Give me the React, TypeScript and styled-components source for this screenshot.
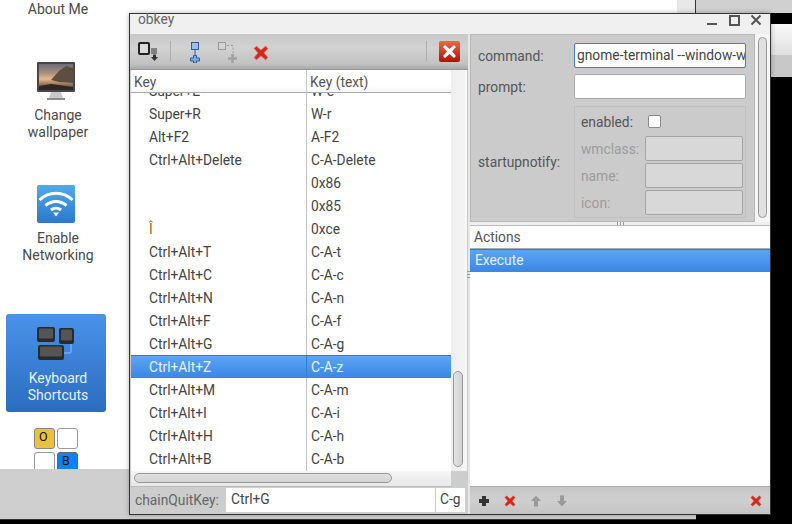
import React from "react";
import styled, { createGlobalStyle } from "styled-components";

const Global = createGlobalStyle`
  html, body { margin: 0; padding: 0; background: #000; }
  body { font-family: Roboto, "Liberation Sans", sans-serif; font-size: 13.8px; color: #444; overflow: hidden; }
  * { box-sizing: border-box; }
`;

const Desktop = styled.div`
  position: relative;
  width: 792px;
  height: 524px;
  overflow: hidden;
  background: #000;
`;
const Backdrop = styled.div`
  display: grid;
  grid-template-columns: 129px 567px 96px;
  grid-template-rows: 469px 51px;
  height: 524px;
`;
const Sidebar = styled.div`
  background: #fff;
  display: flex;
  flex-direction: column;
  border-right: 1px solid #333;
  overflow: hidden;
  width: 130px;
`;
const SideItem = styled.div<{ $top: number; $active?: boolean }>`
  width: 100px;
  margin: ${(p) => p.$top}px 0 0 6px;
  display: flex;
  flex-direction: column;
  align-items: center;
  gap: 7px;
  flex: none;
  font-size: 14px;
  line-height: 17px;
  text-align: center;
  color: ${(p) => (p.$active ? "#e6f0fb" : "#4a4a4a")};
  ${(p) =>
    p.$active &&
    `height: 98px; padding-top: 11px; border-radius: 3px; background: linear-gradient(#4a92ea, #2a6dc0);`}
`;
const SideLabel = styled.div`
  white-space: pre-line;
  margin-left: 4px;
`;
const Tiles = styled.div`
  display: grid;
  grid-template-columns: 20px 20px;
  gap: 3px;
  margin: 16px 0 0 34px;
`;
const Tile = styled.div<{ $bg: string; $border: string }>`
  width: 21px;
  height: 21px;
  background: ${(p) => p.$bg};
  border: 1px solid ${(p) => p.$border};
  border-radius: 3px;
  font-size: 12.5px;
  line-height: 15px;
  padding-left: 4px;
  color: #111;
`;
const PageMiddle = styled.div`
  background: linear-gradient(to right, #fff 96.8%, #e8e8e8 96.8%);
  border-right: 1px solid #333;
`;
const PageRight = styled.div`
  display: flex;
  flex-direction: column;
  background: #000;
`;
const RightBand = styled.div<{ $h: number; $bg: string }>`
  height: ${(p) => p.$h}px;
  background: ${(p) => p.$bg};
  flex: none;
`;
const BottomBar = styled.div`
  grid-column: 1 / 3;
  background: #cfcfcf;
  border-bottom: 1px solid #333;
`;

const Win = styled.div`
  position: absolute;
  left: 129px;
  top: 13px;
  width: 642px;
  height: 502px;
  background: #f0f0f0;
  border: 1px solid #333;
  display: flex;
  flex-direction: column;
  box-shadow: 0 0 5px rgba(0, 0, 0, 0.3);
`;
const TitleBar = styled.div`
  height: 20px;
  flex: none;
  display: flex;
  align-items: center;
  justify-content: space-between;
  padding: 0 8px 11px 8px;
  color: #666;
`;
const WinBtns = styled.div`
  display: flex;
  gap: 10px;
  align-items: center;
  margin-top: 3px;
`;
const Panes = styled.div`
  flex: 1;
  display: flex;
  min-height: 0;
`;
const LeftPane = styled.div`
  width: 338px;
  flex: none;
  display: flex;
  flex-direction: column;
  background: #cbcbcb;
`;
const Toolbar = styled.div`
  height: 36px;
  flex: none;
  display: flex;
  align-items: center;
  padding: 0 8px;
  background: linear-gradient(#c9c9c9, #d2d2d2 40%, #c2c2c2 85%, #aaa);
  border-bottom: 1px solid #999;
`;
const TbSep = styled.div<{ $ml?: number }>`
  width: 1px;
  height: 21px;
  margin-left: ${(p) => p.$ml ?? 0}px;
  background: #aeaeae;
  flex: none;
`;
const TbIcon = styled.svg<{ $ml: number }>`
  margin-left: ${(p) => p.$ml}px;
  flex: none;
  display: block;
`;
const TbCross = styled.span`
  display: block;
  flex: none;
  margin: 3px 0 0 14px;
  line-height: 0;
`;
const Spacer = styled.div`
  flex: 1;
`;
const TableArea = styled.div`
  display: grid;
  grid-template-columns: 320px 16px;
  grid-template-rows: 1fr 16px;
  flex: 1;
  min-height: 0;
  margin-left: 1px;
`;
const Table = styled.div`
  background: #fff;
  display: flex;
  flex-direction: column;
  overflow: hidden;
  min-height: 0;
`;
const HeadRow = styled.div`
  height: 23px;
  flex: none;
  display: grid;
  grid-template-columns: 175px 1fr;
  background: linear-gradient(#fff, #fff 70%, #f6f6f6);
  border-bottom: 1px solid #aaa;
  position: relative;
  z-index: 1;
  line-height: 24px;
`;
const HeadCell = styled.div<{ $sep?: boolean }>`
  padding-left: 3px;
  ${(p) => p.$sep && "border-left: 1px solid #c4c4c4;"}
  color: #555;
`;
const Rows = styled.div`
  flex: 1;
  overflow: hidden;
  min-height: 0;
`;
const Row = styled.div<{ $sel?: boolean; $clip?: boolean }>`
  height: 23px;
  display: grid;
  grid-template-columns: 175px 1fr;
  line-height: 25px;
  background: ${(p) => (p.$sel ? "linear-gradient(#5da6f5, #3a86e4)" : "#fff")};
  color: ${(p) => (p.$sel ? "#e4f0fd" : "#444")};
  ${(p) => p.$clip && "margin-top: -14px;"}
  ${(p) => p.$sel && "box-shadow: inset 0 1px 0 #2f7bd8;"}
`;
const KeyCell = styled.div<{ $odd?: boolean }>`
  padding-left: 18px;
  color: ${(p) => (p.$odd ? "#a8602a" : "inherit")};
`;
const TextCell = styled.div<{ $sel?: boolean }>`
  padding-left: 4px;
  border-left: 1px solid ${(p) => (p.$sel ? "#3a78c8" : "#c4c4c4")};
`;
const VTrack = styled.div`
  background: linear-gradient(to right, #eee, #f6f6f6);
  display: flex;
  flex-direction: column;
  justify-content: flex-end;
  padding: 0 4px 4px 2px;
`;
const VThumb = styled.div`
  height: 96px;
  border: 1px solid #999;
  border-radius: 5px;
  background: linear-gradient(to right, #e2e2e2, #d2d2d2);
`;
const HTrack = styled.div`
  background: linear-gradient(#f5f5f5, #e8e8e8);
  padding: 2px 59px 3px 3px;
  display: flex;
  border-bottom: 1px solid #bbb;
`;
const HThumb = styled.div`
  flex: 1;
  border: 1px solid #999;
  border-radius: 5px;
  background: linear-gradient(#e0e0e0, #d4d4d4);
`;
const Corner = styled.div`
  background: #cdcdcd;
`;
const KeyBar = styled.div`
  height: 27px;
  flex: none;
  display: flex;
  align-items: flex-start;
  padding: 1px 3px 0 5px;
  background: #cdcdcd;
  color: #666;
`;
const KeyLabel = styled.div`
  width: 91px;
  line-height: 24px;
  flex: none;
`;
const KeyField = styled.div`
  flex: 1;
  height: 24px;
  display: grid;
  grid-template-columns: 209px 1fr;
  background: #fff;
  line-height: 23px;
  color: #444;
`;
const KeyValue = styled.div<{ $sep?: boolean }>`
  padding-left: ${(p) => (p.$sep ? 4 : 5)}px;
  ${(p) => p.$sep && "border-left: 1px solid #ccc;"}
`;
const VSplit = styled.div`
  width: 2px;
  flex: none;
  background: #e6e6e6;
  display: flex;
  flex-direction: column;
  justify-content: center;
  gap: 2px;
`;
const VGrip = styled.span`
  width: 3px;
  height: 1px;
  margin-left: -1px;
  background: #9a9a9a;
`;
const RightPane = styled.div`
  flex: 1;
  display: flex;
  flex-direction: column;
  min-width: 0;
`;
const FormRow = styled.div`
  height: 188px;
  flex: none;
  display: flex;
  background: #f6f6f6;
`;
const Form = styled.div`
  width: 285px;
  flex: none;
  background: #cbcbcb;
  border: 1px solid #b8b8b8;
  padding: 8px 8px 3px 7px;
  display: grid;
  grid-template-columns: 96px 1fr;
  grid-template-rows: 25px 25px 1fr;
  row-gap: 6px;
  color: #555;
`;
const FormLabel = styled.div`
  align-self: center;
`;
const Input = styled.div<{ $focus?: boolean }>`
  background: #fff;
  border: 1px solid ${(p) => (p.$focus ? "#3d7fd0" : "#aaa")};
  border-radius: 2px;
  padding-left: 2px;
  line-height: 22px;
  overflow: hidden;
  white-space: nowrap;
  color: #444;
  height: 25px;
`;
const Group = styled.div`
  border: 1px solid #c0c0c0;
  margin-top: 1px;
  padding: 2px 2px 1px 6px;
  display: grid;
  grid-template-columns: 65px 1fr;
  grid-auto-rows: 25px;
  row-gap: 2px;
  align-items: center;
`;
const DisabledLabel = styled.div`
  color: #9b9b9b;
`;
const EnabledLabel = styled.div`
  color: #555;
`;
const Check = styled.div`
  width: 13px;
  height: 13px;
  margin-left: 2px;
  background: #fff;
  border: 1px solid #8a8a8a;
  border-radius: 2px;
`;
const DisabledInput = styled.div`
  height: 25px;
  margin-left: -1px;
  background: #d8d8d8;
  border: 1px solid #a4a4a4;
  border-radius: 2px;
`;
const FormScroll = styled.div`
  flex: 1;
  padding: 3px 3px 4px 3px;
  display: flex;
`;
const FormThumb = styled.div`
  flex: 1;
  border: 1px solid #999;
  border-radius: 5px;
  background: #e0e0e0;
`;
const HSplit = styled.div`
  height: 3px;
  flex: none;
  background: #efefef;
  display: flex;
  justify-content: center;
  gap: 2px;
`;
const Grip = styled.span`
  width: 1px;
  height: 3px;
  background: #9a9a9a;
`;
const ActionsList = styled.div`
  flex: 1;
  min-height: 0;
  background: #fff;
  border-bottom: 1px solid #aaa;
  border-top: 1px solid #bbb;
  display: flex;
  flex-direction: column;
`;
const ActionsHead = styled.div`
  height: 23px;
  flex: none;
  padding-left: 4px;
  line-height: 22px;
  color: #555;
  border-bottom: 1px solid #aaa;
`;
const ActionRow = styled.div`
  height: 23px;
  flex: none;
  padding-left: 5px;
  line-height: 22px;
  background: linear-gradient(#5da6f5, #3a86e4);
  box-shadow: inset 0 1px 0 #2f7bd8;
  color: #e4f0fd;
`;
const ActionsBar = styled.div`
  height: 27px;
  flex: none;
  display: flex;
  align-items: center;
  gap: 14px;
  padding: 0 8px;
  background: linear-gradient(#c6c6c6, #cfcfcf 50%, #c4c4c4);
`;

const Monitor = () => (
  <svg width="38" height="38" viewBox="0 0 38 38">
    <defs>
      <linearGradient id="sky" x1="0" y1="0" x2="0" y2="1">
        <stop offset="0" stopColor="#6e6c78" />
        <stop offset="0.35" stopColor="#a8907f" />
        <stop offset="0.58" stopColor="#e8b98e" />
        <stop offset="0.72" stopColor="#b08a68" />
        <stop offset="1" stopColor="#3c302a" />
      </linearGradient>
    </defs>
    <rect x="0" y="0" width="38" height="30" rx="1" fill="#48484a" />
    <rect x="2" y="2" width="34" height="26" fill="url(#sky)" />
    <path d="M14 18 L22 9 L29 4 L36 6 L36 21 L22 20 Z" fill="#5e4e40" />
    <path d="M2 24 L14 22 L36 25 L36 28 L2 28 Z" fill="#2e2723" />
    <path d="M14 30 H24 L26 36 H12 Z" fill="#c8c8c8" />
    <rect x="10" y="36" width="18" height="2" fill="#8e8e8e" />
  </svg>
);
const Wifi = () => (
  <svg width="38" height="38" viewBox="0 0 38 38">
    <defs>
      <linearGradient id="wf" x1="0" y1="0" x2="0" y2="1">
        <stop offset="0" stopColor="#52aae6" />
        <stop offset="1" stopColor="#2a78cf" />
      </linearGradient>
    </defs>
    <rect width="38" height="38" rx="2" fill="url(#wf)" />
    <g fill="none" stroke="#fff" strokeWidth="3">
      <path d="M2.5 15 C12 6 26 6 35.5 15" />
      <path d="M8.5 20.5 C15 15 23 15 29.5 20.5" />
      <path d="M14 25 C17 22.5 21 22.5 24 25" />
    </g>
    <path d="M16 27.5 H22 L19 31.5 Z" fill="#fff" />
  </svg>
);
const KeyCap = ({ x, y, w, h }: { x: number; y: number; w: number; h: number }) => (
  <>
    <rect x={x} y={y} width={w} height={h} rx="2" fill="#2a2a2a" />
    <rect x={x + 2} y={y + 1.5} width={w - 4} height={h - 5} rx="1" fill="#555" />
  </>
);
const Keys = () => (
  <svg width="38" height="38" viewBox="0 0 38 38">
    <path d="M34 17 V26 Q34 28 32 28 H27" fill="none" stroke="#6cb0f2" strokeWidth="1.5" />
    <KeyCap x={0} y={2} w={18} h={15} />
    <KeyCap x={22} y={3} w={15} h={16} />
    <KeyCap x={1} y={20} w={26} h={15} />
  </svg>
);
const Cross = ({ s = 14 }: { s?: number }) => (
  <svg width={s} height={s} viewBox="0 0 14 14" style={{ display: "block" }}>
    <path d="M3 1 L7 4.5 L11 1 L13 3 L9.5 7 L13 11 L11 13 L7 9.5 L3 13 L1 11 L4.5 7 L1 3 Z" fill="#d4281c" stroke="#e8584a" strokeWidth="0.5" />
  </svg>
);
const PlusIcon = () => (
  <svg width="12" height="12" viewBox="0 0 12 12" style={{ display: "block" }}>
    <path d="M4 1 H8 V4 H11 V8 H8 V11 H4 V8 H1 V4 H4 Z" fill="#333" />
  </svg>
);
const Arrow = ({ down }: { down?: boolean }) => (
  <svg width="12" height="12" viewBox="0 0 12 12" style={{ display: "block" }}>
    <path d={down ? "M4 0.5 H8 V6 H11 L6 11.5 L1 6 H4 Z" : "M6 0.5 L11 6 H8 V11.5 H4 V6 H1 Z"} fill="#9a9a9a" />
  </svg>
);

const rows: [string, string, boolean?][] = [
  ["Super+E", "W-e"],
  ["Super+R", "W-r"],
  ["Alt+F2", "A-F2"],
  ["Ctrl+Alt+Delete", "C-A-Delete"],
  ["", "0x86"],
  ["", "0x85"],
  ["Î", "0xce"],
  ["Ctrl+Alt+T", "C-A-t"],
  ["Ctrl+Alt+C", "C-A-c"],
  ["Ctrl+Alt+N", "C-A-n"],
  ["Ctrl+Alt+F", "C-A-f"],
  ["Ctrl+Alt+G", "C-A-g"],
  ["Ctrl+Alt+Z", "C-A-z", true],
  ["Ctrl+Alt+M", "C-A-m"],
  ["Ctrl+Alt+I", "C-A-i"],
  ["Ctrl+Alt+H", "C-A-h"],
  ["Ctrl+Alt+B", "C-A-b"],
];

export default function App() {
  return (
    <Desktop>
      <Global />
      <Backdrop>
        <Sidebar>
          <SideItem $top={1}>
            <SideLabel>About Me</SideLabel>
          </SideItem>
          <SideItem $top={44}>
            <Monitor />
            <SideLabel>{"Change\nwallpaper"}</SideLabel>
          </SideItem>
          <SideItem $top={44}>
            <Wifi />
            <SideLabel>{"Enable\nNetworking"}</SideLabel>
          </SideItem>
          <SideItem $top={50} $active>
            <Keys />
            <SideLabel>{"Keyboard\nShortcuts"}</SideLabel>
          </SideItem>
          <Tiles>
            <Tile $bg="#e9c23c" $border="#888">O</Tile>
            <Tile $bg="#fff" $border="#999" />
            <Tile $bg="#fff" $border="#999" />
            <Tile $bg="#0a84f0" $border="#666">B</Tile>
          </Tiles>
        </Sidebar>
        <PageMiddle />
        <PageRight>
          <RightBand $h={13} $bg="#d0d0d0" />
          <RightBand $h={11} $bg="#000" />
          <RightBand $h={31} $bg="linear-gradient(#fafafa, #e0e0e0)" />
          <RightBand $h={22} $bg="#c8c8c8" />
        </PageRight>
        <BottomBar />
      </Backdrop>

      <Win>
        <TitleBar>
          obkey
          <WinBtns>
            <svg width="12" height="12" viewBox="0 0 12 12">
              <rect x="1" y="9" width="10" height="2" fill="#555" />
            </svg>
            <svg width="12" height="12" viewBox="0 0 12 12">
              <rect x="2" y="2" width="9" height="9" fill="none" stroke="#555" strokeWidth="2" />
            </svg>
            <svg width="12" height="12" viewBox="0 0 12 12">
              <path d="M1.5 1.5 L10.5 10.5 M10.5 1.5 L1.5 10.5" stroke="#555" strokeWidth="2" />
            </svg>
          </WinBtns>
        </TitleBar>
        <Panes>
          <LeftPane>
            <Toolbar>
              <TbIcon $ml={0} width="21" height="21" viewBox="0 0 21 21">
                <rect x="1" y="2" width="10" height="11" rx="1" fill="#fff" fillOpacity=".25" stroke="#222" strokeWidth="2" />
                <path d="M13 8 H19 M13 10 H19 M13 12 H19" stroke="#333" />
                <path d="M15 13.5 H18 V16 H20 L16.5 20 L13 16 H15 Z" fill="#333" />
              </TbIcon>
              <TbSep $ml={11} />
              <TbIcon $ml={18} width="12" height="22" viewBox="0 0 12 22">
                <rect x="2.5" y="1.5" width="7" height="7" fill="#9fc0ea" stroke="#2a5ca8" />
                <path d="M6 9 V14" stroke="#2a5ca8" />
                <path d="M4.5 14.5 H7.5 V17 H10.5 V20 H7.5 V22 H4.5 V20 H1.5 V17 H4.5 Z" fill="#7fa8dc" stroke="#2a5ca8" />
              </TbIcon>
              <TbIcon $ml={16} width="22" height="22" viewBox="0 0 22 22">
                <rect x="1.5" y="1.5" width="7" height="7" fill="#d4d4d4" stroke="#999" />
                <path d="M10 4.5 H16 V12" stroke="#999" strokeDasharray="2 2" fill="none" />
                <path d="M15.5 13 V22 M11 17.5 H20" stroke="#a0a0a0" strokeWidth="2.5" />
              </TbIcon>
              <TbCross>
                <Cross s={16} />
              </TbCross>
              <Spacer />
              <TbSep />
              <TbIcon $ml={12} width="21" height="21" viewBox="0 0 21 21">
                <defs>
                  <linearGradient id="rb" x1="0" y1="0" x2="0" y2="1">
                    <stop offset="0" stopColor="#e86a48" />
                    <stop offset="1" stopColor="#a81408" />
                  </linearGradient>
                </defs>
                <rect width="21" height="21" rx="2" fill="url(#rb)" />
                <path d="M6 4 L10.5 8 L15 4 L17 6 L13 10.5 L17 15 L15 17 L10.5 13 L6 17 L4 15 L8 10.5 L4 6 Z" fill="#fff" />
              </TbIcon>
            </Toolbar>
            <TableArea>
              <Table>
                <HeadRow>
                  <HeadCell>Key</HeadCell>
                  <HeadCell $sep>Key (text)</HeadCell>
                </HeadRow>
                <Rows>
                  {rows.map(([k, t, sel], i) => (
                    <Row key={i} $sel={sel} $clip={i === 0}>
                      <KeyCell $odd={k === "Î"}>{k}</KeyCell>
                      <TextCell $sel={sel}>{t}</TextCell>
                    </Row>
                  ))}
                </Rows>
              </Table>
              <VTrack>
                <VThumb />
              </VTrack>
              <HTrack>
                <HThumb />
              </HTrack>
              <Corner />
            </TableArea>
            <KeyBar>
              <KeyLabel>chainQuitKey:</KeyLabel>
              <KeyField>
                <KeyValue>Ctrl+G</KeyValue>
                <KeyValue $sep>C-g</KeyValue>
              </KeyField>
            </KeyBar>
          </LeftPane>
          <VSplit>
            <VGrip />
            <VGrip />
            <VGrip />
          </VSplit>
          <RightPane>
            <FormRow>
              <Form>
                <FormLabel>command:</FormLabel>
                <Input $focus>gnome-terminal --window-with-profile</Input>
                <FormLabel>prompt:</FormLabel>
                <Input />
                <FormLabel>startupnotify:</FormLabel>
                <Group>
                  <EnabledLabel>enabled:</EnabledLabel>
                  <Check />
                  <DisabledLabel>wmclass:</DisabledLabel>
                  <DisabledInput />
                  <DisabledLabel>name:</DisabledLabel>
                  <DisabledInput />
                  <DisabledLabel>icon:</DisabledLabel>
                  <DisabledInput />
                </Group>
              </Form>
              <FormScroll>
                <FormThumb />
              </FormScroll>
            </FormRow>
            <HSplit>
              <Grip />
              <Grip />
              <Grip />
            </HSplit>
            <ActionsList>
              <ActionsHead>Actions</ActionsHead>
              <ActionRow>Execute</ActionRow>
            </ActionsList>
            <ActionsBar>
              <PlusIcon />
              <Cross s={12} />
              <Arrow />
              <Arrow down />
              <Spacer />
              <Cross s={12} />
            </ActionsBar>
          </RightPane>
        </Panes>
      </Win>
    </Desktop>
  );
}
